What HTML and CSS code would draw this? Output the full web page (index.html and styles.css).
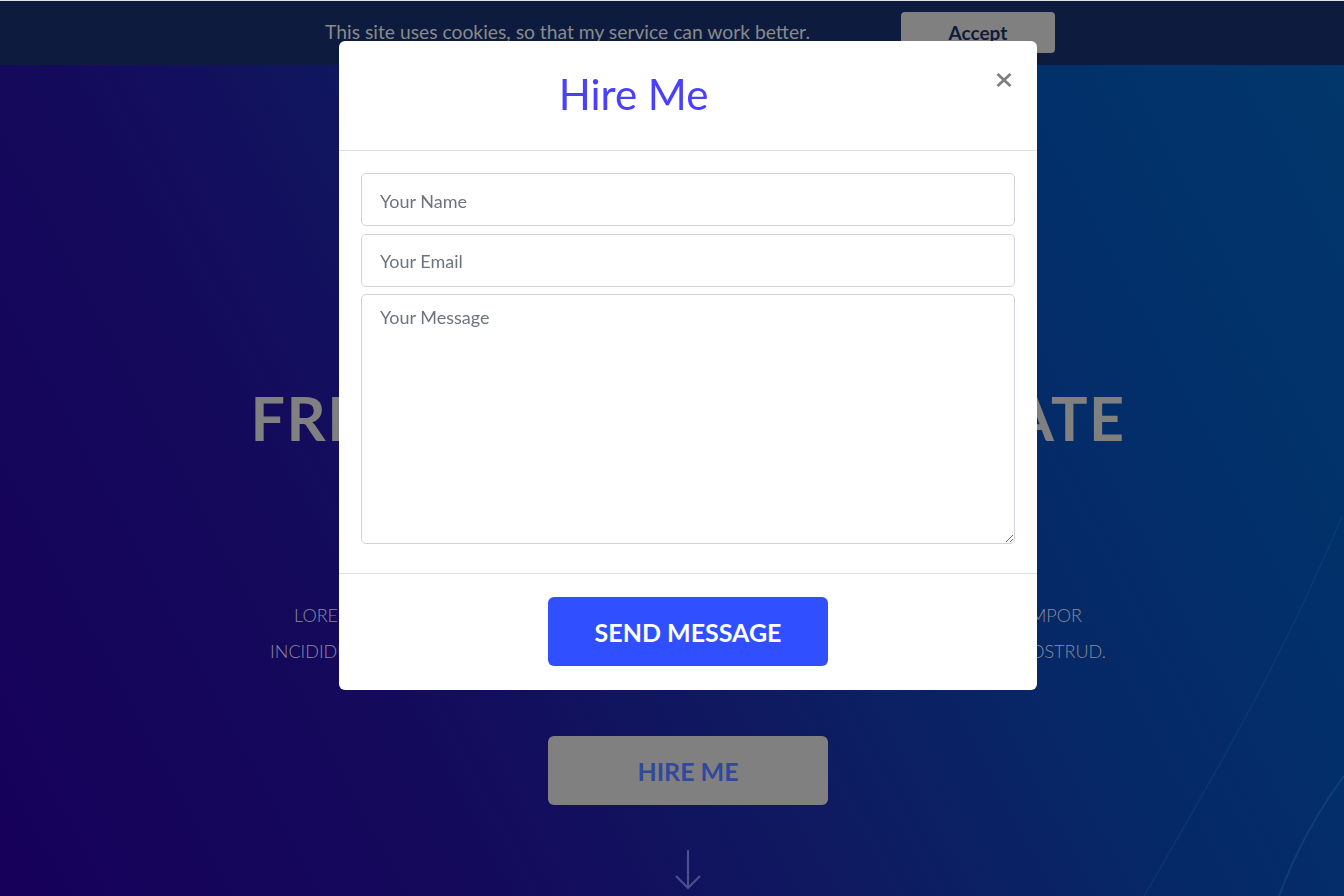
FILE: index.html
```html
<!DOCTYPE html>
<html lang="en">
<head>
<meta charset="utf-8">
<title>Hire Me</title>
<link rel="stylesheet" href="styles.css">
</head>
<body>
<div class="topline"></div>
<div class="cookie-bar">
  <span class="cookie-text">This site uses cookies, so that my service can work better.</span>
  <button class="cookie-accept" type="button">Accept</button>
</div>
<header class="hero">
  <svg class="hero-streaks" width="260" height="420" viewBox="0 0 260 420" aria-hidden="true">
    <path d="M258 40 C 200 180, 130 300, 60 420" fill="none" stroke="#1f6f9a" stroke-opacity="0.18" stroke-width="1.5"/>
    <path d="M260 300 C 230 340, 210 380, 195 420" fill="none" stroke="#2a8aa8" stroke-opacity="0.2" stroke-width="2"/>
  </svg>
  <div class="hero-inner">
    <h1 class="hero-title">FREE BOOTSTRAP TEMPLATE</h1>
    <p class="hero-text">LOREM IPSUM DOLOR SIT AMET, CONSECTETUR ADIPISICING ELIT, SED DO EIUSMOD TEMPOR<br>INCIDIDUNT UT LABORE ET DOLORE MAGNA ALIQUA. UT ENIM AD MINIM VENIAM, QUIS NOSTRUD.</p>
    <a class="hero-btn" href="#">HIRE ME</a>
    <svg class="hero-arrow" width="28" height="42" viewBox="0 0 28 42" aria-hidden="true">
      <path d="M14 1 V39 M2 27 L14 39 L26 27" fill="none" stroke="#4b4f8e" stroke-width="2.2"/>
    </svg>
  </div>
</header>

<div class="modal-layer">
  <div class="modal">
    <div class="modal-header">
      <h2 class="modal-title">Hire Me</h2>
      <button class="modal-close" type="button" aria-label="Close">
        <svg width="16" height="14" viewBox="0 0 16 14" aria-hidden="true">
          <path d="M1.5 1 L14.5 13 M14.5 1 L1.5 13" fill="none" stroke="#808080" stroke-width="2.8"/>
        </svg>
      </button>
    </div>
    <form class="modal-body">
      <input class="field" type="text" placeholder="Your Name">
      <input class="field" type="email" placeholder="Your Email">
      <textarea class="field field-area" placeholder="Your Message"></textarea>
    </form>
    <div class="modal-footer">
      <button class="send-btn" type="button">SEND MESSAGE</button>
    </div>
  </div>
</div>
</body>
</html>
```

FILE: styles.css
```css
* { box-sizing: border-box; }

html, body {
  margin: 0;
  padding: 0;
  height: 896px;
  overflow: hidden;
}

body {
  font-family: Lato, "Open Sans", Arial, sans-serif;
  background: #0d1b3e;
}

.topline {
  height: 1px;
  background: #e2e2e2;
}

.cookie-bar {
  height: 64px;
  background: #0d1b3e;
  display: flex;
  align-items: center;
  justify-content: center;
  gap: 91px;
  padding-left: 36px;
}

.cookie-text {
  font-size: 19.3px;
  color: #8a8a8a;
  margin-top: -4px;
}

.cookie-accept {
  width: 154px;
  height: 41px;
  margin-top: -2px;
  border: 0;
  border-radius: 4px;
  background: #808080;
  color: #0d1b3e;
  font-family: Lato, sans-serif;
  font-weight: 700;
  font-size: 19px;
  padding: 0;
}

.hero {
  position: relative;
  height: 831px;
  background: linear-gradient(62deg, #16005a 0%, #140a5c 28%, #0f1a60 48%, #062866 66%, #02306a 82%, #02376b 100%);
  padding-left: 32px;
  overflow: hidden;
}

.hero-streaks {
  position: absolute;
  right: 0;
  bottom: 0;
}

.hero-inner {
  display: flex;
  flex-direction: column;
  align-items: center;
  padding-top: 317px;
}

.hero-title {
  margin: 0;
  font-size: 61px;
  line-height: 72px;
  font-weight: 700;
  letter-spacing: 1.45px;
  color: #808080;
  white-space: nowrap;
}

.hero-text {
  margin: 143px 0 0;
  font-size: 18px;
  line-height: 36px;
  font-weight: 300;
  color: #8a8c9c;
  text-align: center;
  white-space: nowrap;
}

.hero-btn {
  margin-top: 67px;
  width: 280px;
  height: 69px;
  border-radius: 6px;
  background: #808080;
  color: #30499c;
  font-size: 25px;
  font-weight: 700;
  text-decoration: none;
  display: flex;
  align-items: center;
  justify-content: center;
}

.hero-arrow {
  margin-top: 44px;
}

/* Modal */
.modal-layer {
  position: fixed;
  inset: 0;
  display: flex;
  justify-content: center;
  align-items: flex-start;
  padding: 41px 0 0 32px;
}

.modal {
  width: 698px;
  background: #ffffff;
  border-radius: 6px;
  overflow: hidden;
}

.modal-header {
  display: flex;
  align-items: flex-start;
  padding: 29px 25px 31px 16px;
  border-bottom: 1px solid #dee2e6;
}

.modal-title {
  flex: 1;
  margin: 0;
  text-align: center;
  font-size: 42px;
  line-height: 49px;
  font-weight: 400;
  color: #4a3ffc;
}

.modal-close {
  width: 100px;
  margin-top: 3px;
  padding: 0;
  border: 0;
  background: none;
  display: flex;
  justify-content: flex-end;
}

.modal-close svg { display: block; }

.modal-body {
  display: flex;
  flex-direction: column;
  gap: 7.5px;
  padding: 22px 22px 29px;
  margin: 0;
}

.field {
  display: block;
  width: 100%;
  height: 53px;
  padding: 2px 18px 0;
  border: 1px solid #ced4da;
  border-radius: 5px;
  font-family: Lato, sans-serif;
  font-size: 18px;
  color: #495057;
  background: #fff;
}

.field::placeholder { color: #6c757d; opacity: 1; }

.field-area {
  height: 250px;
  padding-top: 11px;
  resize: vertical;
}

.modal-footer {
  display: flex;
  justify-content: center;
  padding: 23px 16px 24px;
  border-top: 1px solid #dee2e6;
}

.send-btn {
  width: 280px;
  height: 69px;
  border: 0;
  border-radius: 6px;
  background: #304ffe;
  color: #ffffff;
  font-family: Lato, sans-serif;
  font-size: 25px;
  font-weight: 700;
  padding: 0;
}
```
